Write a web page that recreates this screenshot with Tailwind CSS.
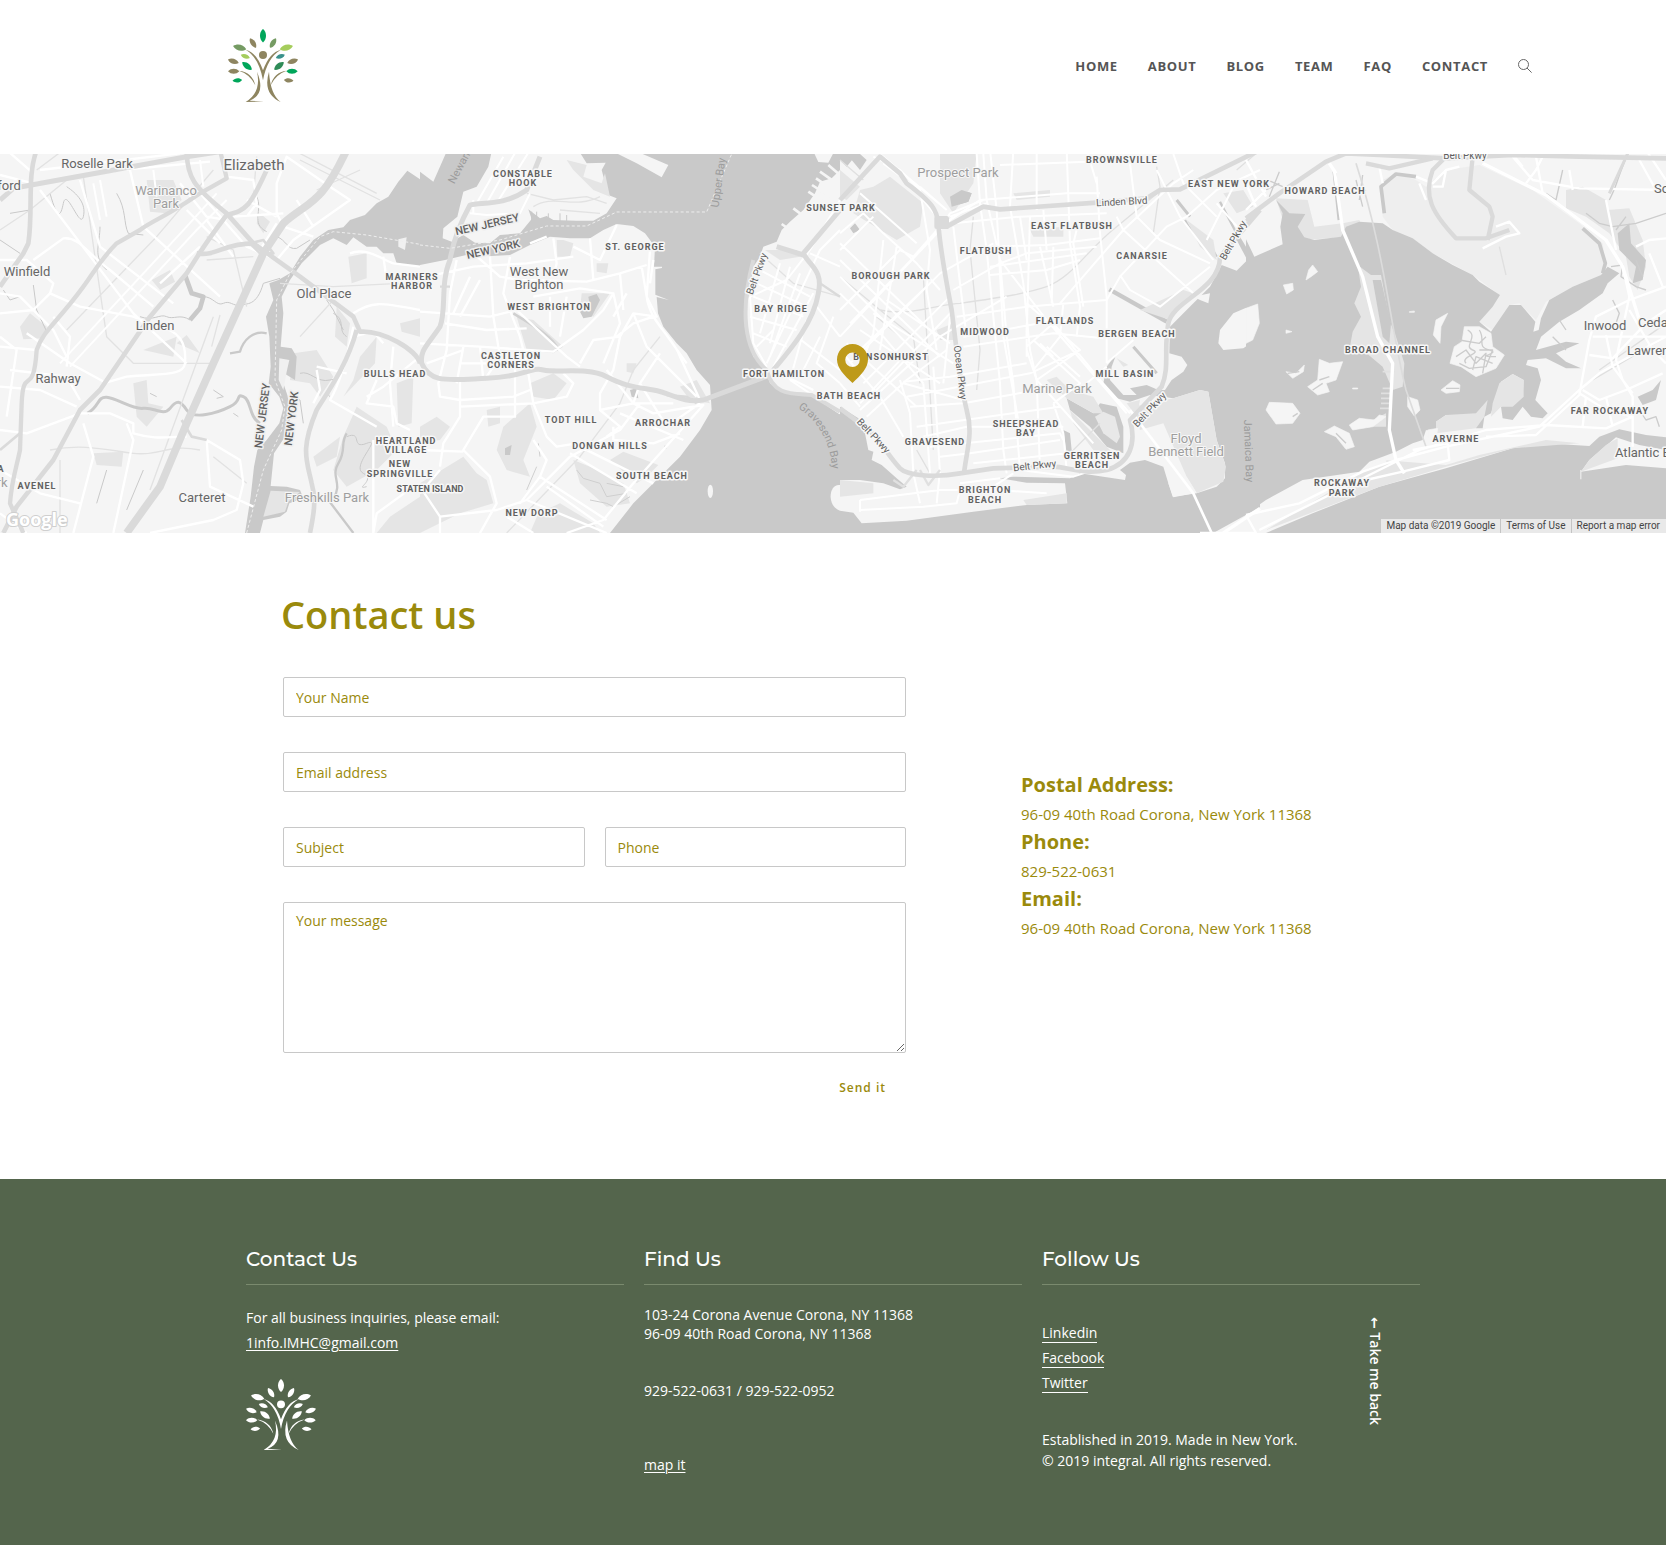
<!DOCTYPE html>
<html lang="en">
<head>
<meta charset="utf-8">
<meta name="viewport" content="width=device-width, initial-scale=1">
<title>Contact us</title>
<script src="https://cdn.jsdelivr.net/npm/@tailwindcss/browser@4"></script>
</head>
<body class="bg-white font-['Open_Sans',sans-serif] text-[#9a8a0c]">

<header class="flex h-[154px] items-start justify-between pl-[228px] pr-[134px]">
  <a href="#" aria-label="Home" class="mt-[29px] block">
    <svg id="logo" class="h-[73px] w-[70px]" viewBox="39 42 210 219">
      <defs><path id="leaf" d="M-17 0C-8 -10 8 -10 17 0C8 10 -8 10 -17 0Z"/></defs>
      <g id="tree">
        <use href="#leaf" transform="translate(144 62) rotate(90) scale(1.2)" fill="#00a65a"/>
        <use href="#leaf" transform="translate(114 84) rotate(58)" fill="#8e8560"/>
        <use href="#leaf" transform="translate(174 84) rotate(-58)" fill="#759b63"/>
        <use href="#leaf" transform="translate(74 98) rotate(14) scale(1.2)" fill="#759b63"/>
        <use href="#leaf" transform="translate(214 98) rotate(-14) scale(1.2)" fill="#a5cd5c"/>
        <use href="#leaf" transform="translate(91 124) rotate(20) scale(.85)" fill="#a5cd5c"/>
        <use href="#leaf" transform="translate(196 124) rotate(-20) scale(.85)" fill="#3a918b"/>
        <use href="#leaf" transform="translate(55 139) rotate(18)" fill="#8e8560"/>
        <use href="#leaf" transform="translate(233 139) rotate(-18)" fill="#8e8560"/>
        <use href="#leaf" transform="translate(96 153) rotate(38) scale(1.08)" fill="#00a65a"/>
        <use href="#leaf" transform="translate(192 153) rotate(-38) scale(1.08)" fill="#2f8c58"/>
        <use href="#leaf" transform="translate(56 169)" fill="#8e8560"/>
        <use href="#leaf" transform="translate(231 169)" fill="#00a65a"/>
        <use href="#leaf" transform="translate(67 196) rotate(-5) scale(.85)" fill="#00a65a"/>
        <use href="#leaf" transform="translate(221 196) rotate(5) scale(.85)" fill="#8e8560"/>
        <g fill="#8e8560">
          <circle cx="144" cy="120" r="12"/>
          <path d="M92 104Q125 112 144 166Q163 112 198 104Q156 128 144 196Q132 128 92 104Z"/>
          <path d="M72 167Q112 172 121 211Q106 178 72 167ZM215 167Q176 172 167 211Q182 178 215 167Z"/>
          <path d="M126 170Q154 238 104 257L147 260L92 261Q140 232 126 170ZM162 170Q142 236 197 261Q166 238 162 170Z"/>
        </g>
      </g>
    </svg>
  </a>
  <nav class="mt-[54px] flex items-center gap-[30px] text-[13px] leading-6 font-bold tracking-wider text-[#555]">
    <a href="#">HOME</a>
    <a href="#">ABOUT</a>
    <a href="#">BLOG</a>
    <a href="#">TEAM</a>
    <a href="#">FAQ</a>
    <a href="#">CONTACT</a>
    <button type="button" aria-label="Search" class="block">
      <svg class="h-[14px] w-[14px]" viewBox="0 0 14 14" fill="none" stroke="#666"><circle cx="5.5" cy="5.5" r="5"/><path d="M9 9l4.6 4.6"/></svg>
    </button>
  </nav>
</header>

<section aria-label="Map" class="relative h-[379px] overflow-hidden bg-[#f5f5f5] font-[Roboto,sans-serif]">
  <svg class="block h-full w-full" viewBox="0 0 1666 379" preserveAspectRatio="xMidYMid slice" fill="none" stroke-linejoin="round">
    <rect width="1666" height="379" fill="#f5f5f5"/>

    <!-- western shore: New Jersey -->
    <g transform="translate(0 -4) scale(.333333)">
      <g fill="#e5e5e5">
        <path d="M440 90H520L545 150L500 190L450 185ZM60 530L90 490L140 530L130 565L70 568ZM280 910L370 905L365 950L290 945ZM430 600L530 560L520 620ZM530 580L560 555L600 610ZM400 700L440 690L445 760L490 770L440 830L410 800ZM1045 320L1100 310V385L1055 400ZM1010 470L1050 520L1040 590L1005 560ZM880 610L950 600L1000 680L960 740L930 700L870 690ZM1080 620L1130 560L1125 640L1030 740L1060 690ZM1070 770L1160 830L1190 900L1130 960L1040 1010L1000 960L1030 860ZM940 920L1020 860L1010 920L950 950ZM1170 1100L1260 1040V1149H1130ZM1190 700L1240 680L1235 820L1195 830ZM780 190L810 215L790 250L770 220ZM455 390L510 360L525 395L480 420ZM1200 520L1260 505V560L1205 545Z"/>
      </g>
      <path fill="#c9c9c9" d="M1260 88L1222 62L1195 95L1165 140L1130 160L1095 195L1050 210L1030 232L985 240L940 270L900 320L870 370L835 390L808 400L820 450L798 500L808 560L812 650L806 700L838 740L850 775L838 820L800 870L772 900L762 950L752 1040L735 1149H780L790 1110L840 1100L860 1085L868 1060L910 1045L900 1020L860 1010L812 1008L822 910L862 850L872 790L862 735L850 700L852 670L885 690L890 620L875 595L842 590L850 490L845 440L870 390L905 340L960 285L1000 265L1040 285L1060 262L1100 290L1130 290L1150 310L1180 310L1190 340L1260 350Z"/>
      <path fill="#f0f0f0" d="M838 625L868 630L860 665L850 720L836 690ZM1195 268L1220 262L1215 300L1195 290Z"/>
      <path fill="#e5e5e5" d="M812 1022L900 1026L865 1055L855 1085L790 1100Z"/>
      <g stroke="#c9c9c9" stroke-width="10">
        <path d="M262 790C300 770 290 740 320 742S400 780 430 775S490 800 510 775S540 750 560 780S650 790 690 770S705 730 730 740S745 800 780 820" stroke-width="9"/>
        <path d="M555 375L575 430L610 440L600 475L570 510" stroke-width="14"/>
        <path d="M985 1050L1060 1149M1040 850C1020 880 1040 900 1015 940S1030 1000 1000 1045M800 550C760 540 730 570 720 605L690 610" stroke-width="7"/>
        <path d="M570 510C540 490 520 510 500 500S460 515 420 500M610 440C640 440 650 470 670 460S700 470 720 465S770 470 790 400L840 385M830 260C860 270 860 300 890 295L930 270M770 140C790 180 750 220 800 245M150 130C170 200 180 210 190 160S240 240 250 200S230 130 200 110M350 130C380 180 370 220 385 250L430 255M300 230C300 280 280 310 310 350L320 360M30 190L90 180M0 270L60 310M100 405L110 480L140 545M10 420L30 450L60 440M1000 490C1040 510 1010 540 1040 560M640 720L670 740L650 745M700 790L715 800M980 450L1000 480L1030 540M1040 860C1090 840 1050 900 1100 880S1050 950 1090 970S1060 1020 1100 1010M900 670C930 660 950 700 990 690S970 730 990 740M450 730L470 740M320 960L290 1060M430 960L380 1080M870 740L900 750L910 820" stroke-width="3"/>
      </g>
      <g stroke="#e2e2e2" stroke-width="4">
        <path d="M0 240L90 180L200 90M250 80L320 560L400 640L640 640M190 0L110 60M200 540L470 260L640 60M150 900C250 880 320 900 400 910S500 880 600 900M180 930L180 1149M740 1000L640 920M660 495L635 590M760 140L770 20M880 0L1130 130M900 30L1140 150M620 330L760 320M840 400L1000 410L1200 400M900 560L1000 450M620 260L700 300L740 470M950 120L1080 60M450 1020L640 500"/>
      </g>
      <g stroke="#fff" stroke-width="7">
        <path d="M0 75L100 100L360 60L630 35M120 60L540 10M20 0L100 70M120 120L400 490L560 640M240 90L300 290L520 460M390 60L430 230L660 440M100 330L190 265C240 260 260 310 330 360L460 470M0 330L80 330L160 400L150 430L240 470L400 500L470 530C540 540 560 580 555 640C550 680 480 670 380 680L310 700M80 550L210 640L320 700M0 490L100 480L150 430M110 600L0 590M0 560L50 600L20 800M30 660L200 680L240 750M0 710L120 720L230 770M0 840L80 850L240 790L330 790L400 820V850C470 870 500 860 560 860M620 870L720 930L730 1000L710 1080L640 1110L450 1149M380 820L400 870L340 1149M250 820L280 920L220 1149M0 960L120 1030L240 1060M0 1090L80 1149M540 100L620 200L680 210M600 130L740 290L830 330L880 270L1050 150L990 110L860 20L830 100L830 190L850 230L940 260M740 150L830 200M620 210L700 320M160 500L210 560L200 650M0 430L60 440L160 540L200 620M480 400L600 290M560 180L660 280M430 40L580 20M680 80L760 90L770 160L740 200M890 150L940 230M700 200L850 190M1050 310C1100 290 1150 330 1180 340L1260 350M1150 320L1160 390M1060 490C1120 450 1150 460 1260 480M1060 530C1040 630 1020 700 990 750L1130 830M1130 690L1100 760L1180 770L1190 820L1230 840M950 660L960 720L940 760M1260 620L1150 710L1100 740M1180 590L1170 700L1180 830M1120 1149L1130 1090L1240 1010M1120 870V1149M780 300L830 220M620 870L630 1010L760 1070M950 650L1040 670M1060 560L1120 545L1150 580" />
        <path d="M180 640L560 230L650 130M210 650L590 240L680 150M280 100L300 210M300 90L320 200M460 60L470 140M600 30L610 110" stroke-width="6"/>
      </g>
      <g stroke="#dadada" stroke-width="14">
        <path d="M0 150L40 115L560 20L760 -10" stroke-width="15"/>
        <path d="M110 0C80 80 100 180 85 280L70 310L0 410" stroke-width="14"/>
        <path d="M560 0C560 80 580 110 680 190L760 280L900 380L1060 500L1080 545C1150 540 1250 600 1260 640" stroke-width="14"/>
        <path d="M800 60C750 170 740 180 680 195C600 300 600 310 560 370L450 500L300 720L240 780L160 930L50 1070L10 1149"/>
        <path d="M660 0L680 85L600 130C500 200 460 210 420 240L350 280C300 330 280 370 250 410C170 520 130 540 110 600C100 750 70 640 65 760L60 900C50 950 35 990 30 1060L70 1149" stroke-width="13"/>
        <path d="M1040 0C960 170 930 150 850 220L790 310L640 640L560 820L480 1010L380 1149" stroke-width="23"/>
        <path d="M590 310C650 320 670 280 760 280M750 275L800 310M1070 540C1040 650 980 730 950 780C900 900 920 930 935 1000C950 1050 940 1100 930 1149" stroke-width="14"/>
        <path d="M750 280L790 270L820 310L780 310ZM545 810L575 860L620 870M0 900L60 850" stroke-width="8"/>
      </g>
      <path d="M740 1149L790 960L845 840L855 770L825 690L830 450L870 370L960 260L1000 245L1100 255L1260 283" stroke="#eee" stroke-width="3" stroke-dasharray="9 7"/>
    </g>

    <!-- Staten Island and Upper Bay -->
    <g transform="translate(420 -4) scale(.333333)">
      <rect width="1260" height="1149" fill="#c9c9c9"/>
      <g fill="#f5f5f5">
        <path d="M0 0H82L40 95L0 65ZM216 0L205 50L170 110L130 125L112 200L70 235L68 265L95 275L130 255L165 278L210 280L240 255L300 250L335 207L325 178L360 205L380 198L400 210L470 212L520 212L560 190L590 145L565 135L545 60L557 38L500 40L475 0ZM570 0L650 40L725 82L745 45L640 0ZM1178 0L1195 36L1225 38L1245 0Z"/>
        <path d="M0 345L75 330L160 310L215 318L270 315L330 285L390 260L450 265L510 265L550 240L590 222L640 228L675 250L705 290L702 350H726V354L706 358V434L746 450L710 441L714 490L730 530L770 580L800 610L830 660L870 705L875 780L840 840L780 920L700 1000L640 1060L570 1149H0Z"/>
        <path d="M1260 60L1235 85L1200 95L1185 130L1150 180L1110 215L1085 240L1070 275L1030 290L1020 320L1000 350L985 440L975 490L980 560L1000 620L1035 655L1050 700L1090 725L1175 730L1260 790Z"/>
        <ellipse cx="871" cy="1024" rx="8" ry="20"/><path d="M1260 1005C1225 1000 1220 1070 1260 1082Z"/>
      </g>
      <g stroke="#f5f5f5" stroke-width="8"><path d="M1200 65L1250 100M1188 85L1240 120M1176 105L1230 140M1165 125L1210 155M1120 175L1160 205M1085 222L1125 250M1225 45L1260 75"/></g>
      <g stroke="#c9c9c9" stroke-width="3"><path d="M335 185V215M350 185V210M420 190V215M440 195V215M385 190V212"/></g>
      <g fill="#e5e5e5">
        <path d="M440 30L500 45L490 80L545 100L555 70L570 140L520 120L460 60ZM485 430L570 430L520 500L480 480ZM290 500L340 510L430 590L400 610L320 600ZM330 700L400 670L440 700L400 750L340 740ZM570 930L610 905L715 945L680 980L650 1000ZM460 930L510 950L610 1000L630 1060L560 1070L480 1000ZM0 1000L130 920L170 970L200 990L220 1060L120 1090L0 1149ZM250 830L330 760L350 830L310 930L330 980L260 960L230 900ZM0 830L50 800L90 830L60 870L0 880ZM355 1090L420 1060L520 1120L540 1149H330ZM780 710L830 690L870 760L810 750ZM410 270H430L440 320H412ZM530 340L565 340L560 370L530 365ZM1035 300L1130 300L1140 320L1080 330ZM620 640L650 640L640 670L620 665ZM430 270L460 280L450 320L425 320ZM200 780L240 770V820L205 830Z"/>
      </g>
      <path fill="#c9c9c9" d="M505 440L530 432L540 450L515 500L490 505L480 485L510 470ZM630 720L650 715L655 745L635 740ZM255 895L275 885L270 915L255 915ZM735 885L740 895L730 898Z"/>
      <path d="M280 490C330 520 400 560 415 600" stroke="#d0d0d0" stroke-width="8"/>
      <g stroke="#cfcfcf" stroke-width="3"><path d="M470 960L490 985L540 1000L560 1040L620 1030M510 1050L560 1060L580 1070L630 1040M350 950L320 1020M560 1000L610 1010M355 880L360 920"/></g>
      <g stroke="#e2e2e2" stroke-width="4"><path d="M720 560L640 660L600 760L480 920L260 1149M320 130L400 150L500 140L560 160M340 170C400 130 460 180 540 140M420 180L540 190M1020 310L1120 400L1260 440"/></g>
      <g stroke="#fff" stroke-width="7">
        <path d="M0 485L210 500L290 480L440 620L480 650M0 580L180 590L400 605L490 540L550 480L580 430L480 415L340 440M160 310L240 380L300 390L500 395L600 370L680 345M75 520L200 540L320 535M110 330L90 430L80 600L55 700L60 740L120 750L280 740L330 720M210 320L220 500L240 620M270 320L250 430L300 560L320 640M400 265L410 340L400 380M510 265L520 390M390 440V530M440 440L420 560M690 300L680 440C690 520 760 560 780 620L840 750M665 350L680 440L710 500L640 490L600 560L580 660L540 730V780L640 760L660 700L720 610M600 560L520 570L480 640M580 430L600 520L550 640M600 370L610 480M330 280L380 260M150 380L100 490M180 390L120 500M130 590L110 700M180 590L190 690M240 620L200 680M285 640V800L190 800L130 900L210 980L230 1060L180 1149M0 900L130 905M120 690V800L70 880L60 950M0 1010L60 1100V1149M60 1100L230 1080L320 1050L450 920L600 840L660 760M450 910L650 1030M480 890L700 1000M360 980L560 1110M380 1010L550 1130M320 1050L560 1149M120 770L340 760L380 860L410 890L470 880M340 760L440 740L460 700L430 670M340 870L380 930L360 980L300 1060M320 640L340 760M640 760L700 790L850 765L640 1000L550 1110L440 1149M600 790L790 870M560 660L640 760L760 760M660 700L740 830L840 760M580 830V870L700 880L780 850M590 560L640 520L700 500L800 640M640 490L680 590L830 740M700 330L690 400M590 225L540 330L460 290M620 430L580 500M20 380L160 350L320 340L460 320M20 640L130 600M60 960L0 1030M260 1100L340 1149M540 780L600 830L560 860M120 640L240 640"/>
        <path d="M170 160L250 20M200 160L290 0M230 160L330 0M150 190L200 195L300 190L330 130M160 150L160 190" stroke-width="6"/>
        <path d="M1260 150L1170 300L1100 390L990 440M1260 240L1200 300L1040 640M1020 360L1170 440M1010 400L1160 470M1000 440L1150 500M990 500L1130 540M1000 550L1100 590M1080 340L1020 550M1110 350L1050 580M1140 370L1050 620M1180 430L1060 650M1010 590L1060 540M1260 560L1190 470M1130 560L1260 660M1160 510L1110 690M1110 690L1260 790M1060 660L1180 720M1200 560L1140 680M1240 500L1190 640L1260 700M1170 310L1260 350M990 440L1000 580L1040 650" stroke-width="6"/>
      </g>
      <g stroke="#dadada">
        <path d="M360 20L320 120C250 170 180 155 150 165C120 220 100 270 90 330C60 400 80 480 60 530C20 590 0 600 5 640C30 700 80 690 200 685S330 650 370 660S500 650 560 680S640 710 700 720S780 760 850 750L1050 675" stroke-width="15"/>
        <path d="M1000 330C960 480 970 600 1040 660C1060 740 1120 730 1175 735L1260 785" stroke-width="12"/>
        <path d="M1260 180L1150 310C1170 350 1210 360 1195 430C1180 520 1110 600 1060 660M1150 315L1070 290" stroke-width="15"/>
        <path d="M1200 400L1260 440M740 735L800 740L830 760M60 410H90" stroke-width="7"/>
      </g>
      <path d="M0 285L90 295L240 270L380 228L500 228L590 186L860 186L935 12" stroke="#eee" stroke-width="3" stroke-dasharray="9 7"/>
    </g>

    <!-- Brooklyn -->
    <g transform="translate(840 -4) scale(.333333)">
      <g fill="#c9c9c9">
        <path d="M0 770L55 805L75 850L85 900L100 905L95 930L125 945L170 985L200 1010L180 1018L130 1000L60 990L0 990ZM0 0H60L20 50L0 30Z"/>
        <path d="M0 1082L40 1088L65 1120L200 1112L400 1085L560 1065L682 1060L675 1000L560 998L480 985L520 980L690 985L720 970L855 990L858 975L840 960L870 938L915 930L970 950L985 1000L998 1040L1070 1030L1130 1010L1155 985V940L1130 870L1105 725L1080 720L1000 745L930 735L870 755L830 745L790 700L800 650L830 610L815 650L810 690L850 735L890 735L870 715L920 705L955 720L975 720L995 690L1030 665L1042 645L1025 620L988 610L990 530L1060 460L1110 410L1145 345L1190 362L1222 330L1190 270L1200 260L1218 290L1225 330L1260 320V1072L1200 1105L1120 1149H0Z"/>
        <path d="M330 140L365 120L395 130L385 155L335 170ZM670 840L690 850L695 900L720 910L680 910ZM680 745L760 790L780 760L830 770L850 830L850 910L800 890L750 830L690 780Z"/>
      </g>
      <path fill="#e8e8e8" d="M765 800L790 785L825 800L840 860L830 880L790 850Z"/>
      <g stroke="#c9c9c9"><path d="M808 418L980 515" stroke-width="13"/><path d="M880 590L950 670M1010 150L1050 200" stroke-width="9"/><path d="M1035 210C1060 260 1080 270 1110 285L1130 320M1140 155L1200 270M1050 230L1090 280" stroke-width="7"/></g>
      <g fill="#e5e5e5">
        <path d="M300 12H410L400 100L340 190L300 130ZM100 110L150 80L250 160L240 230L170 270L40 190L60 120ZM620 690L650 680L690 720L760 740L790 790L760 790L680 745ZM690 780L750 840L830 920L760 900L700 820ZM970 820L900 840L880 770L1000 745L1080 720L1105 725L1130 870L1158 950L1150 995L1070 1030L1040 980ZM570 240L670 230V260H580ZM520 130L630 120V140L530 150ZM0 990L100 1000L100 1030L0 1040ZM900 480L1030 420L1060 430L990 510ZM290 540L340 520V570H300ZM1150 130L1210 120L1240 170L1190 190ZM850 650L830 625L865 645ZM0 60L60 110L20 150L0 140ZM860 760L900 750L890 800ZM550 1050L680 1030V1060L560 1065ZM1040 210L1120 270L1130 330L1080 290Z"/>
      </g>
      <path fill="#c9c9c9" d="M330 140L365 120L395 130L385 155L335 170ZM45 220L60 240L40 250L30 235ZM20 12H60L80 30L60 60Z"/>
      <path fill="#f5f5f5" d="M1135 580L1140 540L1180 490L1250 460L1260 465V560L1210 595L1150 600ZM985 1000L1040 980L1070 1028L1000 1042ZM1060 440L1110 430L1105 460L1080 450Z"/>
      <g stroke="#e0e0e0" stroke-width="4"><path d="M0 380L120 480C220 500 300 460 360 460C500 440 560 430 620 410C700 380 740 300 830 230L1000 90M250 380L280 900M400 200L390 300L420 600L410 720M950 50L960 110L940 250M120 480L220 560L240 700M0 30L70 90M110 500L180 560M230 900L270 970M1190 60L1260 0M780 820L700 900"/></g>
      <g stroke="#fff" stroke-width="6">
        <path d="M0 380L220 600M0 330L300 620M30 520L290 250L340 200M0 430L130 560L250 700M0 560L300 240M30 640L300 370L460 280M70 700L330 440M90 740L340 480M60 780L300 560L500 440M0 480L180 300L220 320L300 230M130 270L100 550L60 650M170 290L120 600M60 600L270 400M0 600L120 740L190 860M20 580L230 770M60 540L300 700M100 490L340 640M140 450L330 580M0 700L60 770M0 250L70 190L130 250L230 340L300 420M0 300L100 200M80 800L200 690L320 600M60 760L190 620M0 280L290 560M300 240L330 190L430 150M330 200L440 160"/>
        <path d="M410 12L420 160L440 300L480 700L490 900L500 970M430 12L440 150L480 330L500 560L520 700L540 960M450 0L470 180L490 560L540 840M520 0L510 170L550 400L570 600L590 690L600 960M540 200L560 330M570 200L560 560M600 290L640 470M640 290L635 460M680 0L690 280L720 470L710 560M710 240L700 280L730 470M770 80L780 250L800 440V640M740 0L770 100M610 180L620 300M590 0V180M870 40L890 200"/>
        <path d="M300 230L420 150L680 130H780M480 45L740 35L870 20M340 220L540 200L800 190M450 290L620 285L780 265M340 420L480 340L560 310L770 290M450 375L620 360L720 330M450 350L740 310M350 500L560 470L800 450M370 560L600 520L750 500M370 590L640 550L790 565M190 695L330 680L560 640M200 740L570 670L720 600M210 770L370 760L590 720M230 830L660 770M250 860L380 830L670 830M270 890L660 850L670 870M300 920L390 910L660 870M400 940L680 910M190 700L370 750M180 690L210 790L220 970M250 700L270 970M280 650L300 970M330 500L310 700M340 230L360 400L380 560M560 600L590 690L760 880M560 590L640 520L740 640L860 790M480 330L620 510L860 790M560 460L720 600L590 690M580 570L720 700L640 760M640 760L670 850L680 960M660 460L850 240L1000 100L1060 60M670 460L660 560L580 660M620 590L720 680M850 240L960 340L1060 430M830 200L850 240M890 200L960 270L1110 340M800 450L840 380L980 230L1040 200M840 375L870 420L960 470L1110 350M950 60L1020 200L1120 330M1000 12L1030 100L1130 200M1040 200L1130 120L1260 60M1100 270L1190 90M1130 160L1200 240L1260 180M800 640L880 570M740 700L800 650M780 690L870 790M540 960L700 980L760 960M60 1050L300 1020L470 1020L620 1030M60 1080L250 1070L350 1060L360 1020M60 1050V1085M220 970L240 1060M300 960L290 1060M360 1000L480 985M520 970L460 1010M100 20L180 60L240 120L270 300L260 420L290 600M240 110L320 180M60 130L230 280M120 12L320 180M130 40L210 100L290 200M640 620L600 580M560 520V620"/>
        <path d="M870 780L1060 1030L1115 1149" stroke-width="8"/><path d="M1150 1149L1260 1075" stroke-width="10"/>
      </g>
      <path d="M160 990L190 1010L230 960M240 960L265 1005L300 960" stroke="#e0e0e0" stroke-width="7"/>
      <g stroke="#dadada" stroke-width="14">
        <path d="M0 150L120 20L180 70L200 100C280 160 290 180 295 220C300 300 320 400 335 480C350 600 360 700 380 780C400 850 380 900 372 970"/>
        <path d="M300 220L320 230L430 170L480 178L770 158L920 145L960 120L1020 118L1260 0"/>
        <path d="M290 205H320V230H290Z" fill="#dadada"/>
        <path d="M1260 180L1140 320C1140 420 1000 450 985 520C970 600 990 650 965 710L870 810C890 880 870 940 800 960C730 975 680 950 640 950L460 955L360 970C280 985 200 975 180 955C130 900 120 860 60 820L0 775"/>
      </g>
      <path d="M1080 1149L1250 1149" stroke="#fff" stroke-width="8"/>
    </g>

    <!-- Jamaica Bay and the Rockaways -->
    <g transform="translate(1246 -4) scale(.333333)">
      <path fill="#eeeeee" d="M410 90L450 70L510 90L540 110L600 60L700 45L860 120L1000 220L1070 280L1080 350L1065 375L980 410L900 455L870 510L820 460L790 465L740 540L700 515L760 435L680 375L560 310L440 240L410 200Z"/>
      <path fill="#e5e5e5" d="M90 145L185 150L205 230L290 220L340 210L345 225L290 262L175 270L120 240ZM960 120L1010 110L1080 150L1085 180L1150 175L1190 270L1200 350L1175 420L1150 380L1140 320L1090 250L1020 200L960 175Z"/>
      <g fill="#c9c9c9">
        <path d="M0 268L25 320L110 283L103 230L110 190L90 150L130 190L178 192L155 230L175 262L205 270L285 260L300 230L340 215L410 220L440 240L500 265L560 310L620 345L680 375L700 395L762 435L740 470L700 515L735 545L790 465L825 465L868 515L862 545L878 540L885 505L910 450L980 410L1065 375L1085 350L1120 370L1085 400L1070 430L1000 480L940 515L885 560L870 600L960 575L1000 580L930 610L960 635L1005 655L960 655L900 625L845 630L840 645L875 655L885 690L868 750L905 790L890 805L855 800L830 770L800 810L770 805L765 770L830 740L833 690L800 672L765 695L735 790L715 800L710 835L690 835L690 800L600 795L570 815L570 850L540 840L530 870L500 880L450 905L370 935L340 965L170 990L60 1050L0 1092Z"/>
        <path d="M0 1149L60 1149L200 1090L400 1010L600 955L800 895L900 880L1030 888L1060 860L1120 838L1200 855L1260 862V1149ZM1115 250L1150 220L1155 280L1200 330L1190 390L1160 400L1170 350L1120 300ZM1175 740L1220 720L1245 690L1230 750L1190 765Z"/>
      </g>
      <path fill="#f5f5f5" d="M1005 965L1030 930L1110 862L1180 885L1260 900V955L1140 945ZM1003 960H1006V988H1003Z"/>
      <path fill="#e5e5e5" d="M1005 965L1030 930L1080 885L1115 865V925ZM335 345L375 375H405L430 510L450 560L475 640L470 710L440 720L410 650L350 600L310 600L320 545L345 500L325 460L345 410ZM570 815L600 795L690 790L725 750L715 800L690 835L570 850ZM760 700L800 672L833 690V740L800 770H765L735 800L740 760ZM410 930L600 945L700 915L900 870L1000 880L800 895L600 950L400 1010L100 1125L60 1140ZM380 810L420 790V830L380 830Z"/>
      <path fill="#c9c9c9" d="M380 390H405L435 520L430 580L410 560Z"/>
      <g fill="#f5f5f5" stroke="#f5f5f5" stroke-width="2">
        <path d="M200 345L215 365L195 380L180 390L188 360ZM112 405L140 400L142 420L122 432ZM120 540L138 545L120 550ZM0 475L35 462L40 520L20 570L0 580ZM570 510L605 490L585 530L582 580L562 555ZM70 757L140 760L162 790L140 820L90 822L60 780ZM220 628L250 640L290 635L270 690L240 700L250 725L215 735L185 710L215 690ZM120 665L150 670L175 645L172 665L140 685ZM585 720L620 692L642 705L640 725L600 730ZM235 845L265 828L310 850L325 890L300 898L270 860ZM310 825L340 805L385 810L400 795L420 800L380 830L320 840ZM655 530L700 530L735 550L740 590L775 615L750 655L690 680L645 650L612 640L625 590L648 575ZM485 740L515 750L522 780L505 798L485 770ZM490 485L505 483V487H490ZM320 714H335V717H320ZM365 945L420 925V940L370 955ZM545 840L575 835L570 870L545 860Z"/>
      </g>
      <g stroke="#cccccc" stroke-width="4">
        <path d="M665 540C700 560 650 590 680 600S640 620 660 640M700 540C720 570 690 590 730 600S680 620 750 620M630 620L660 600L690 640L720 610L710 670M640 570L700 580L720 560M680 660L690 620L740 640M220 690L250 680M200 720L230 700M600 715L640 715M140 800L155 790M125 670L160 665M640 640L670 655L720 650L740 600L700 600M270 850L300 880"/>
        <path d="M1150 0C1100 120 1120 90 1090 150M900 130L930 150L950 60M1020 190L1060 220L1100 230L1170 220L1260 190M1095 350L1130 345L1125 380L1170 410L1200 420M1180 780L1200 810L1230 800L1240 830M1100 450L1120 490L1110 520M940 510L960 540M920 560L960 600M1140 200L1110 240M60 120L100 100M65 90L110 110M70 140L100 65M350 75L340 150M330 90L350 170M340 130L360 120M1170 330L1190 380"/>
      </g>
      <path d="M415 190L405 110L450 72L510 80M1010 235L1060 280L1078 340L1070 370M265 65L280 210" stroke="#c9c9c9" stroke-width="11"/>
      <path d="M410 665L445 665M410 715H435M405 730H435M405 745H435M405 760H435M402 775H432" stroke="#e0e0e0" stroke-width="5"/>
      <path d="M330 40C420 320 430 520 480 720L540 890" stroke="#dcdcdc" stroke-width="5"/>
      <path d="M1040 690L1260 560M760 290L780 375M1060 660L1260 520" stroke="#dfdfdf" stroke-width="4"/>
      <g stroke="#fff" stroke-width="7">
        <path d="M265 60L290 240L350 380L395 560L440 640L430 840L450 930L475 970" stroke-width="10"/>
        <path d="M710 40L900 135L1080 270L1130 350L1180 510M250 40L270 70" stroke-width="10"/>
        <path d="M0 1095L160 1060L350 965L450 930L600 890L880 830L1000 720L1060 670L1150 620L1260 560M40 1140L400 960L520 900L720 840L900 825L1080 835L1160 800V890M360 990L470 965L610 930L605 880L500 900M0 1095L30 1149M720 860L870 855L1000 735L1030 570L1050 500L1150 450L1260 410M1130 350L1150 440L1110 630L1130 690L1160 740V800M1080 555L1100 650L1160 730M1030 615L1100 625L1200 520L1260 480M1150 480L1220 600L1260 640M1010 720L1060 750L1140 720L1250 670M1000 730L1080 780L1160 800M1010 830L1020 740M1080 740L1100 830M800 20L860 90L1000 115L1260 120M870 20L890 130M790 0L830 50M900 0L870 60L840 100M1180 30L1230 120M1080 150L1090 200L1110 300M1200 0L1260 90M1170 290L1210 270L1260 265M1210 310L1250 410M400 50L410 100M510 80L560 100L600 60L640 50M520 100L540 150M60 120L0 180M0 100L30 170M0 30L60 140M600 60L590 110L560 110M710 295L780 260L820 250L790 215L750 230M970 60L980 120M1040 560L1260 560"/>
      </g>
      <g stroke="#dadada" stroke-width="14">
        <path d="M0 205L100 130L240 35L300 10L400 15L600 25L800 15L1000 20L1260 25"/>
        <path d="M360 40L430 55L560 25M600 20L560 60C530 140 560 190 630 265L720 265L790 240M680 20L670 120L730 170L740 200L725 270" stroke-width="13"/>
        <path d="M1150 0L1090 130M0 212L30 190" stroke-width="9"/>
      </g>
    </g>

    <!-- district names -->
    <g fill="#616161" stroke="#f7f7f7" stroke-width="3" paint-order="stroke" text-anchor="middle" class="text-[9px] font-bold tracking-[1px]">
      <text x="523" y="23">CONSTABLE</text><text x="523" y="32">HOOK</text>
      <text x="635" y="96">ST. GEORGE</text>
      <text x="412" y="126">MARINERS</text><text x="412" y="135">HARBOR</text>
      <text x="549" y="156">WEST BRIGHTON</text>
      <text x="511" y="205">CASTLETON</text><text x="511" y="214">CORNERS</text>
      <text x="395" y="223">BULLS HEAD</text>
      <text x="571" y="269">TODT HILL</text><text x="663" y="272">ARROCHAR</text>
      <text x="610" y="295">DONGAN HILLS</text><text x="652" y="325">SOUTH BEACH</text>
      <text x="406" y="290">HEARTLAND</text><text x="406" y="299">VILLAGE</text>
      <text x="400" y="313">NEW</text><text x="400" y="323">SPRINGVILLE</text>
      <text x="532" y="362">NEW DORP</text>
      <text x="37" y="335">AVENEL</text><text x="1" y="318">A</text>
      <text x="841" y="57">SUNSET PARK</text><text x="891" y="125">BOROUGH PARK</text>
      <text x="781" y="158">BAY RIDGE</text><text x="784" y="223">FORT HAMILTON</text>
      <text x="849" y="245">BATH BEACH</text><text x="891" y="206">BENSONHURST</text>
      <text x="986" y="100">FLATBUSH</text><text x="1072" y="75">EAST FLATBUSH</text>
      <text x="1122" y="9">BROWNSVILLE</text><text x="1229" y="33">EAST NEW YORK</text>
      <text x="1142" y="105">CANARSIE</text><text x="1065" y="170">FLATLANDS</text>
      <text x="985" y="181">MIDWOOD</text><text x="1137" y="183">BERGEN BEACH</text>
      <text x="1125" y="223">MILL BASIN</text><text x="935" y="291">GRAVESEND</text>
      <text x="1026" y="273">SHEEPSHEAD</text><text x="1026" y="282">BAY</text>
      <text x="1092" y="305">GERRITSEN</text><text x="1092" y="314">BEACH</text>
      <text x="985" y="339">BRIGHTON</text><text x="985" y="349">BEACH</text>
      <text x="1325" y="40">HOWARD BEACH</text><text x="1388" y="199">BROAD CHANNEL</text>
      <text x="1456" y="288">ARVERNE</text><text x="1610" y="260">FAR ROCKAWAY</text>
      <text x="1342" y="332">ROCKAWAY</text><text x="1342" y="342">PARK</text>
    </g>
    <text x="430" y="338" fill="#616161" stroke="#f7f7f7" stroke-width="3" paint-order="stroke" text-anchor="middle" class="text-[9px] font-bold">STATEN ISLAND</text>

    <!-- towns -->
    <g fill="#666" stroke="#f7f7f7" stroke-width="3" paint-order="stroke" text-anchor="middle" class="text-[13px]">
      <text x="97" y="14">Roselle Park</text><text x="254" y="16" class="text-[15px]">Elizabeth</text>
      <text x="9" y="36">ford</text><text x="27" y="122">Winfield</text>
      <text x="155" y="176">Linden</text><text x="324" y="144">Old Place</text>
      <text x="58" y="229">Rahway</text><text x="202" y="348">Carteret</text>
      <text x="539" y="122">West New</text><text x="539" y="135">Brighton</text>
      <text x="1605" y="176">Inwood</text>
    </g>
    <g fill="#666" stroke="#f7f7f7" stroke-width="3" paint-order="stroke" class="text-[13px]">
      <text x="1654" y="39">South</text><text x="1638" y="173">Cedarhurst</text>
      <text x="1627" y="201">Lawrence</text><text x="1615" y="303">Atlantic Beach</text>
    </g>

    <!-- parks -->
    <g fill="#9e9e9e" stroke="#f7f7f7" stroke-width="2" paint-order="stroke" text-anchor="middle" class="text-[13px]">
      <text x="166" y="41">Warinanco</text><text x="166" y="54">Park</text>
      <text x="327" y="348">Freshkills Park</text><text x="2" y="333">rk</text>
      <text x="958" y="23">Prospect Park</text><text x="1057" y="239">Marine Park</text>
      <text x="1186" y="289">Floyd</text><text x="1186" y="302">Bennett Field</text>
    </g>

    <!-- state lines -->
    <g fill="#616161" stroke="#efefef" stroke-width="3" paint-order="stroke" text-anchor="middle" class="text-[11px] font-medium">
      <text transform="translate(488 74) rotate(-13)">NEW JERSEY</text>
      <text transform="translate(494 99) rotate(-13)">NEW YORK</text>
      <text transform="translate(266 262) rotate(-83)">NEW JERSEY</text>
      <text transform="translate(295 265) rotate(-83)">NEW YORK</text>
    </g>

    <!-- road names -->
    <g fill="#616161" stroke="#f7f7f7" stroke-width="3" paint-order="stroke" text-anchor="middle" class="text-[10px]">
      <text transform="translate(760 121) rotate(-70)">Belt Pkwy</text>
      <text transform="translate(871 284) rotate(47)">Belt Pkwy</text>
      <text transform="translate(1035 315) rotate(-6)">Belt Pkwy</text>
      <text transform="translate(1152 258) rotate(-47)">Belt Pkwy</text>
      <text transform="translate(1236 88) rotate(-60)">Belt Pkwy</text>
      <text x="1465" y="5">Belt Pkwy</text>
      <text transform="translate(1122 51) rotate(-3)">Linden Blvd</text>
      <text transform="translate(957 219) rotate(83)">Ocean Pkwy</text>
    </g>

    <!-- water names -->
    <defs><path id="gravesend" d="M798 254C820 268 832 292 832 318"/></defs>
    <g fill="#9c9c9c" text-anchor="middle" class="text-[11px]">
      <text transform="translate(463 14) rotate(-62)">Newark</text>
      <text transform="translate(722 29) rotate(-82)">Upper Bay</text>
      <text transform="translate(1245 297) rotate(88)">Jamaica Bay</text>
      <text text-anchor="start"><textPath href="#gravesend">Gravesend Bay</textPath></text>
    </g>

    <text x="6" y="372" fill="#fff" stroke="#cfcfcf" stroke-width="2" paint-order="stroke" class="font-['Open_Sans',sans-serif] text-[18px] font-bold">Google</text>

    <path fill="#be9a1a" fill-rule="evenodd" d="M852.500 190C861 190 868 197 868 205.500C868 214 861 221 852.500 229C844 221 837 214 837 205.500C837 197 844 190 852.500 190ZM852.500 198.500A7.300 7.300 0 1 0 852.500 213.100A7.300 7.300 0 1 0 852.500 198.500Z"/>
  </svg>
  <div class="absolute right-0 bottom-0 flex h-[14px] items-center divide-x divide-[#c4c4c4] bg-[#ececec]/90 text-[10px] leading-[14px] text-[#444]">
    <span class="px-[5px]">Map data ©2019 Google</span>
    <a href="#" class="px-[5px]">Terms of Use</a>
    <a href="#" class="pr-[6px] pl-[5px]">Report a map error</a>
  </div>
</section>

<main class="mx-auto grid max-w-[1100px] grid-cols-[minmax(0,623fr)_minmax(0,362fr)] gap-x-[115px] pt-[54px] pb-[71px]">
  <div>
    <h1 class="-ml-[2px] text-[38px] leading-[54px] font-semibold">Contact us</h1>
    <form class="mt-[36px] grid grid-cols-2 gap-x-5 gap-y-[35px] text-[14px]">
      <input type="text" aria-label="Your Name" placeholder="Your Name" class="col-span-2 h-10 rounded-[2px] border border-[#c8c8c8] px-3 placeholder:text-[#9a8a0c]">
      <input type="email" aria-label="Email address" placeholder="Email address" class="col-span-2 h-10 rounded-[2px] border border-[#c8c8c8] px-3 placeholder:text-[#9a8a0c]">
      <input type="text" aria-label="Subject" placeholder="Subject" class="h-10 min-w-0 rounded-[2px] border border-[#c8c8c8] px-3 placeholder:text-[#9a8a0c]">
      <input type="tel" aria-label="Phone" placeholder="Phone" class="h-10 min-w-0 rounded-[2px] border border-[#c8c8c8] px-3 placeholder:text-[#9a8a0c]">
      <textarea aria-label="Your message" placeholder="Your message" class="col-span-2 h-[151px] rounded-[2px] border border-[#c8c8c8] px-3 py-2 leading-5 placeholder:text-[#9a8a0c]"></textarea>
      <button type="submit" class="col-span-2 -mt-[20px] mr-5 h-10 justify-self-end text-[12px] font-semibold tracking-[1px]">Send it</button>
    </form>
  </div>
  <address class="mt-[184px] text-[15px] leading-7 not-italic">
    <h2 class="mb-[2px] text-[20px] leading-[27px] font-bold">Postal Address:</h2>
    <p>96-09 40th Road Corona, New York 11368</p>
    <h2 class="mb-[2px] text-[20px] leading-[27px] font-bold">Phone:</h2>
    <p>829-522-0631</p>
    <h2 class="mb-[2px] text-[20px] leading-[27px] font-bold">Email:</h2>
    <p>96-09 40th Road Corona, New York 11368</p>
  </address>
</main>

<footer class="min-h-[366px] bg-[#54654c] pt-[64px] text-[14px] leading-[25px] text-white">
  <div class="mx-auto grid max-w-[1174px] grid-cols-3 gap-5">
    <section>
      <h2 class="border-b border-[#7a8a6e] pb-[9px] font-[Montserrat,Inter,sans-serif] text-[20px] leading-8 font-medium">Contact Us</h2>
      <p class="mt-5">For all business inquiries, please email:</p>
      <a href="mailto:1info.IMHC@gmail.com" class="underline underline-offset-2">1info.IMHC@gmail.com</a>
      <svg class="mt-6 block h-[71px] w-[70px] brightness-0 invert" viewBox="39 42 210 219" preserveAspectRatio="none"><use href="#tree"/></svg>
    </section>
    <section>
      <h2 class="border-b border-[#7a8a6e] pb-[9px] font-[Montserrat,Inter,sans-serif] text-[20px] leading-8 font-medium">Find Us</h2>
      <p class="mt-5 leading-[19px]">103-24 Corona Avenue Corona, NY 11368<br>96-09 40th Road Corona, NY 11368</p>
      <p class="mt-[35px]">929-522-0631 / 929-522-0952</p>
      <a href="#" class="mt-[49px] inline-block underline underline-offset-2">map it</a>
    </section>
    <section>
      <h2 class="border-b border-[#7a8a6e] pb-[9px] font-[Montserrat,Inter,sans-serif] text-[20px] leading-8 font-medium">Follow Us</h2>
      <div class="flex justify-between">
        <ul class="mt-[38px] flex flex-col items-start gap-[5px] leading-[19px]">
          <li class="flex"><a href="#" class="border-b border-white">Linkedin</a></li>
          <li class="flex"><a href="#" class="border-b border-white">Facebook</a></li>
          <li class="flex"><a href="#" class="border-b border-white">Twitter</a></li>
        </ul>
        <a href="#" class="mt-8 mr-8 font-semibold [writing-mode:vertical-rl]"><span class="font-['DejaVu_Sans',sans-serif] text-[14px] font-bold">←</span> Take me back</a>
      </div>
      <p class="mt-1 leading-[21px]">Established in 2019. Made in New York.<br>© 2019 integral. All rights reserved.</p>
    </section>
  </div>
</footer>
</body>
</html>
